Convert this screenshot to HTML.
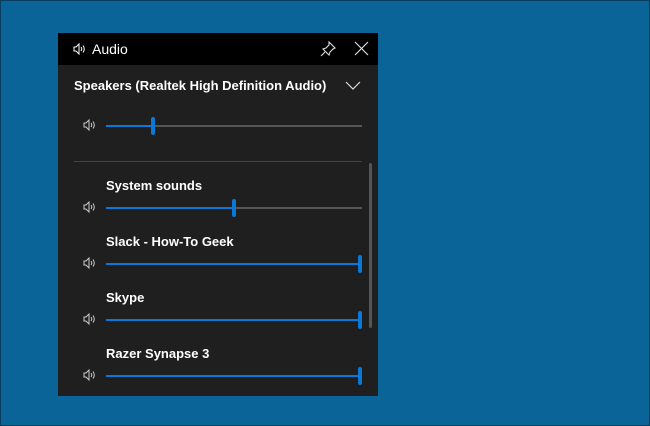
<!DOCTYPE html><html><head><style>
body{margin:0;width:650px;height:426px;background:#0b6498;position:relative;overflow:hidden;font-family:"Liberation Sans",sans-serif;}
.frame{position:absolute;left:0;top:0;width:648px;height:424px;border:1px solid #0a3d5e;}
.panel{position:absolute;left:58px;top:33px;width:320px;height:363px;background:#1f1f1f;}
.hdr{position:absolute;left:0;top:0;width:320px;height:32px;background:#000;}
.t{position:absolute;color:#fff;font-weight:bold;font-size:13px;white-space:nowrap;}
.tr{position:absolute;left:106px;width:256px;height:2px;background:#555;}
.fill{position:absolute;left:0;top:0;height:2px;background:#0a78d7;}
.th{position:absolute;top:-8px;width:4px;height:18px;background:#0a78d7;border-radius:2px;}
.ic{position:absolute;left:24px;}
</style></head><body><div class="frame"></div>
<div class="panel">
<div class="hdr">
<svg style="position:absolute;left:15px;top:10px" width="14" height="12" viewBox="0 0 14 12" fill="none" stroke="#fff" stroke-width="1"><path d="M1 4h2l3-3v10l-3-3H1z"/><path d="M8 4q1.5 2 0 4M10 2.5q2.5 3.5 0 7"/></svg>
<div class="t" style="left:34px;top:8px;font-weight:normal;font-size:14px">Audio</div>
<svg style="position:absolute;left:262px;top:8px" width="16" height="16" viewBox="0 0 16 16" fill="none" stroke="#ddd" stroke-width="1.1"><path d="M9 1l6 6-2 1-3 3-1 3-6-6 3-1 3-3zM5 11l-4 4"/></svg>
<svg style="position:absolute;left:296px;top:8px" width="15" height="15" viewBox="0 0 15 15" stroke="#ddd" stroke-width="1.2"><path d="M1 1l13 13M14 1L1 14"/></svg>
</div>
<div class="t" style="left:16px;top:45px">Speakers (Realtek High Definition Audio)</div>
<svg style="position:absolute;left:287px;top:48px" width="16" height="10" viewBox="0 0 16 10" fill="none" stroke="#ddd" stroke-width="1.2"><path d="M1 1l7 7 7-7"/></svg>
<div style="position:absolute;left:16px;top:128px;width:288px;height:1px;background:#444"></div>
<div style="position:absolute;left:311px;top:130px;width:3px;height:165px;background:#555;border-radius:2px"></div>
<div class="t" style="left:48px;top:145px">System sounds</div>
<div class="t" style="left:48px;top:201px">Slack - How-To Geek</div>
<div class="t" style="left:48px;top:257px">Skype</div>
<div class="t" style="left:48px;top:313px">Razer Synapse 3</div>
</div>
<div id="s"></div>
<script>
var ys=[125,207,263,319,375],xs=[153,234,360,360,360],h='';
for(var i=0;i<5;i++){var w=xs[i]-106;
h+='<svg style="position:absolute;left:82px;top:'+(ys[i]-6)+'px" width="16" height="12" viewBox="0 0 14 12" fill="none" stroke="#ccc" stroke-width="1"><path d="M1 4h2l3-3v10l-3-3H1z"/><path d="M8 4q1.5 2 0 4M10 2.5q2.5 3.5 0 7"/></svg>';
h+='<div class="tr" style="top:'+ys[i]+'px"><div class="fill" style="width:'+w+'px"></div><div class="th" style="left:'+(w-2)+'px"></div></div>';}
document.getElementById('s').innerHTML=h;
</script>
</body></html>
